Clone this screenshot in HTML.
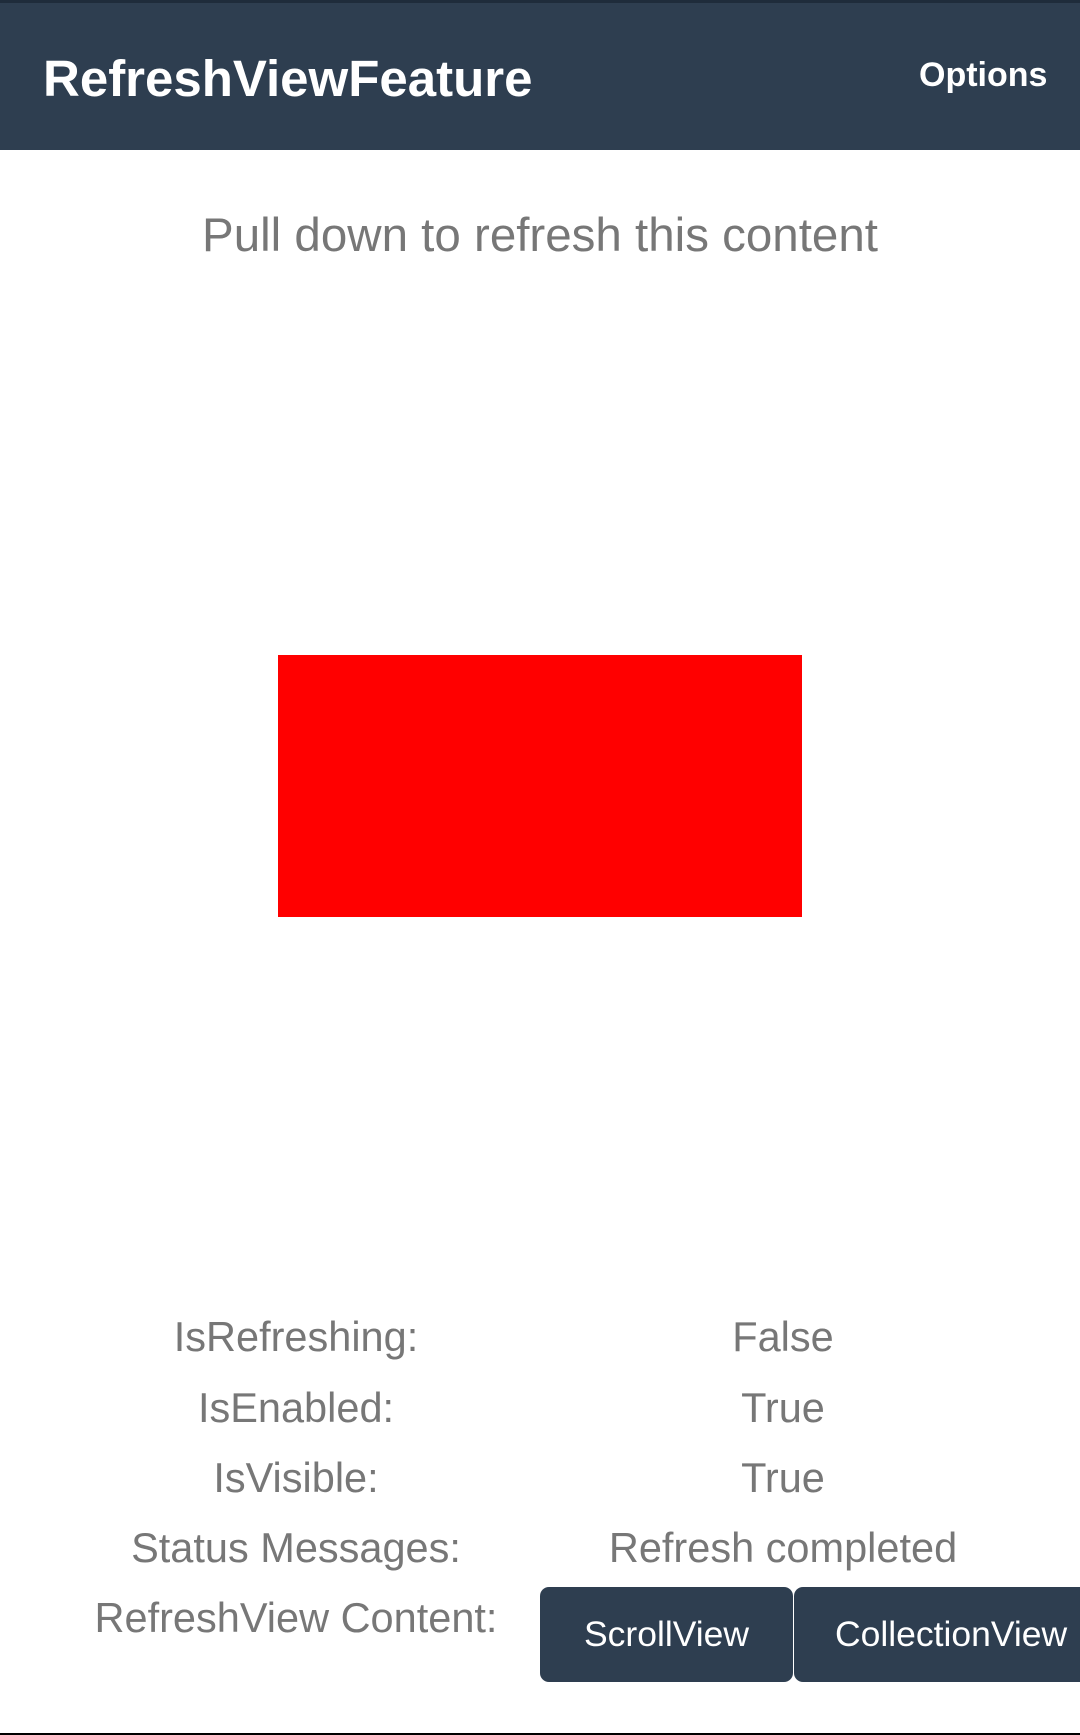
<!DOCTYPE html>
<html><head><meta charset="utf-8"><style>
*{margin:0;padding:0;box-sizing:border-box}
html,body{width:1080px;height:1735px;background:#fff;overflow:hidden;font-family:"Liberation Sans",sans-serif;position:relative}
.hdr{position:absolute;left:0;top:0;width:1080px;height:150px;background:#2e3e50;border-top:3px solid #1f2c3b}
.t{position:absolute;white-space:nowrap;line-height:1}
.lbl{color:#777;font-size:41.5px}
.btn{position:absolute;top:1587px;height:95px;background:#2e3e50;border-radius:9px;color:#fff;font-size:35.5px}
</style></head><body>
<div class="hdr"></div>
<div class="t" style="left:43px;top:53px;color:#fff;font-size:51px;font-weight:bold">RefreshViewFeature</div>
<div class="t" style="left:919px;top:58px;color:#fff;font-size:34px;font-weight:bold">Options</div>
<div class="t lbl" style="left:0;width:1080px;text-align:center;top:212px;font-size:47.5px">Pull down to refresh this content</div>
<div style="position:absolute;left:278px;top:655px;width:524px;height:262px;background:#f00"></div>

<div class="t lbl" style="left:96px;width:400px;text-align:center;top:1316px">IsRefreshing:</div>
<div class="t lbl" style="left:583px;width:400px;text-align:center;top:1316px">False</div>
<div class="t lbl" style="left:96px;width:400px;text-align:center;top:1387px">IsEnabled:</div>
<div class="t lbl" style="left:583px;width:400px;text-align:center;top:1387px">True</div>
<div class="t lbl" style="left:96px;width:400px;text-align:center;top:1457px">IsVisible:</div>
<div class="t lbl" style="left:583px;width:400px;text-align:center;top:1457px">True</div>
<div class="t lbl" style="left:96px;width:400px;text-align:center;top:1527px">Status Messages:</div>
<div class="t lbl" style="left:583px;width:400px;text-align:center;top:1527px">Refresh completed</div>
<div class="t lbl" style="left:46px;width:500px;text-align:center;top:1597px">RefreshView Content:</div>

<div class="btn" style="left:540px;width:253px"><span class="t" style="left:0;width:253px;text-align:center;top:30px">ScrollView</span></div>
<div class="btn" style="left:794px;width:300px"><span class="t" style="left:41px;top:30px">CollectionView</span></div>
<div style="position:absolute;left:0;top:1733px;width:1080px;height:2px;background:#000"></div>
</body></html>
